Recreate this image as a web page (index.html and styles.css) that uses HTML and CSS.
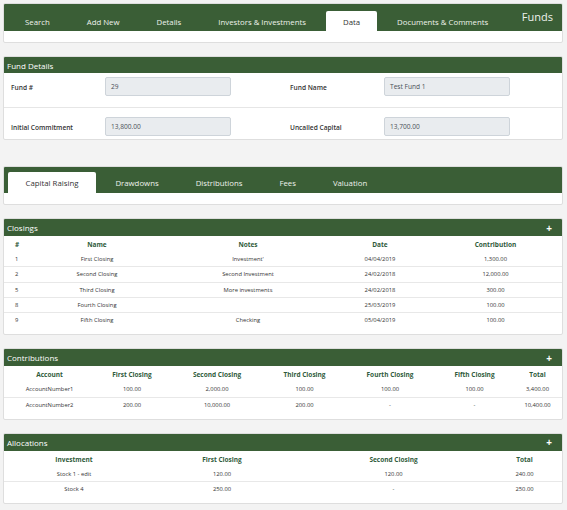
FILE: index.html
```html
<!DOCTYPE html>
<html lang="en">

<head>
    <meta charset="UTF-8">
    <meta name="viewport" content="width=device-width, initial-scale=1.0">
    <link rel="stylesheet" href="styles.css">
    <title>Funds</title>
</head>

<body>
    <!-- main navigation -->
    <div class="card">
        <div class="nav">
            <span class="tab">Search</span>
            <span class="tab">Add New</span>
            <span class="tab">Details</span>
            <span class="tab">Investors &amp; Investments</span>
            <span class="tab active">Data</span>
            <span class="tab">Documents &amp; Comments</span>
            <span class="title">Funds</span>
        </div>
        <div class="navBody"></div>
    </div>

    <div class="card">
        <div class="cardHeader small">Fund Details</div>
        <div class="fieldRow">
            <div class="field">
                <label>Fund #</label>
                <div class="input">29</div>
            </div>
            <div class="field">
                <label>Fund Name</label>
                <div class="input">Test Fund 1</div>
            </div>
        </div>
        <hr class="sep">
        <div class="fieldRow last">
            <div class="field">
                <label>Initial Commitment</label>
                <div class="input">13,800.00</div>
            </div>
            <div class="field">
                <label>Uncalled Capital</label>
                <div class="input">13,700.00</div>
            </div>
        </div>
    </div>

    <!-- sub tabs -->
    <div class="card subTabs">
        <div class="nav nav2">
            <span class="tab active">Capital Raising</span>
            <span class="tab">Drawdowns</span>
            <span class="tab">Distributions</span>
            <span class="tab">Fees</span>
            <span class="tab">Valuation</span>
        </div>
        <div class="navBody"></div>
    </div>

    <div class="card">
        <div class="cardHeader">Closings <span class="plus">+</span></div>
        <table class="grid">
            <colgroup>
                <col class="w25"><col class="w136"><col class="w166"><col class="w98"><col class="w133">
            </colgroup>
            <thead>
                <tr><th class="left">#</th><th>Name</th><th>Notes</th><th>Date</th><th>Contribution</th></tr>
            </thead>
            <tbody>
                <tr><td class="left">1</td><td>First Closing</td><td>Investment'</td><td>04/04/2019</td><td>1,300.00</td></tr>
                <tr><td class="left">2</td><td>Second Closing</td><td>Second Investment</td><td>24/02/2018</td><td>12,000.00</td></tr>
                <tr><td class="left">5</td><td>Third Closing</td><td>More investments</td><td>24/02/2018</td><td>300.00</td></tr>
                <tr><td class="left">8</td><td>Fourth Closing</td><td></td><td>25/03/2019</td><td>100.00</td></tr>
                <tr><td class="left">9</td><td>Fifth Closing</td><td>Checking</td><td>05/04/2019</td><td>100.00</td></tr>
            </tbody>
        </table>
    </div>

    <div class="card">
        <div class="cardHeader">Contributions <span class="plus">+</span></div>
        <table class="grid">
            <colgroup>
                <col class="w91"><col class="w74"><col class="w96"><col class="w79"><col class="w92"><col class="w77"><col class="w49">
            </colgroup>
            <thead>
                <tr><th>Account</th><th>First Closing</th><th>Second Closing</th><th>Third Closing</th><th>Fourth Closing</th><th>Fifth Closing</th><th>Total</th></tr>
            </thead>
            <tbody>
                <tr><td>AccountNumber1</td><td>100.00</td><td>2,000.00</td><td>100.00</td><td>100.00</td><td>100.00</td><td>3,400.00</td></tr>
                <tr><td>AccountNumber2</td><td>200.00</td><td>10,000.00</td><td>200.00</td><td>-</td><td>-</td><td>10,400.00</td></tr>
            </tbody>
        </table>
    </div>

    <div class="card">
        <div class="cardHeader">Allocations <span class="plus">+</span></div>
        <table class="grid">
            <colgroup>
                <col class="w140"><col class="w156"><col class="w187"><col class="w75">
            </colgroup>
            <thead>
                <tr><th>Investment</th><th>First Closing</th><th>Second Closing</th><th>Total</th></tr>
            </thead>
            <tbody>
                <tr><td>Stock 1 - edit</td><td>120.00</td><td>120.00</td><td>240.00</td></tr>
                <tr><td>Stock 4</td><td>250.00</td><td>-</td><td>250.00</td></tr>
            </tbody>
        </table>
    </div>
</body>
</html>
```

FILE: styles.css
```css
* {
    box-sizing: border-box;
}

body {
    margin: 0;
    padding: 3px 4px 0 3px;
    background-color: #f3f3f3;
    font-family: "Open Sans", "Noto Sans", sans-serif;
    color: #333;
}

.card {
    width: 560px;
    background-color: #fff;
    border: 1px solid #dedede;
    border-radius: 2px;
    margin-bottom: 13px;
    overflow: hidden;
}

.subTabs {
    margin-top: 26px;
}

/* tabs */
.nav {
    display: flex;
    align-items: flex-end;
    height: 27px;
    padding-left: 4.5px;
    background-color: #3a5e36;
}

.nav2 {
    height: 26px;
    padding-left: 4px;
}

.tab {
    height: 20px;
    line-height: 22px;
    padding: 0 16.5px;
    margin-right: 4px;
    font-size: 7.8px;
    color: #eef2ec;
    white-space: nowrap;
}

.nav2 .tab {
    height: 21px;
    padding: 0 17.5px;
    margin-right: 2px;
}

.tab.active {
    background-color: #fff;
    color: #333;
    border-radius: 2px 2px 0 0;
}

.title {
    margin-left: auto;
    align-self: center;
    padding: 0 9px 2px 0;
    font-size: 11px;
    color: #eef2ec;
}

.navBody {
    height: 11px;
}

/* card headers */
.cardHeader {
    display: flex;
    align-items: center;
    height: 17px;
    padding: 0 10px 0 3px;
    background-color: #3a5e36;
    color: #fff;
    font-size: 8px;
}

.cardHeader.small {
    height: 16px;
}

.plus {
    margin-left: auto;
    font-size: 10px;
    font-weight: 700;
}

/* fund details */
.fieldRow {
    display: grid;
    grid-template-columns: 1fr 1fr;
    padding: 4px 0;
}

.fieldRow.last {
    padding-bottom: 3px;
}

.field {
    display: flex;
    align-items: center;
    padding-left: 7px;
}

.field label {
    width: 94px;
    padding-top: 2px;
    font-size: 6.6px;
    font-weight: 600;
    color: #333;
}

.input {
    width: 126px;
    height: 19px;
    line-height: 17px;
    padding-left: 5px;
    background-color: #e9ecef;
    border: 1px solid #ced4da;
    border-radius: 2px;
    font-size: 6.6px;
    color: #495057;
}

.sep {
    margin: 7px 0 5px;
    border: 0;
    border-top: 1px solid #e6e6e6;
}

/* tables */
.grid {
    width: 100%;
    table-layout: fixed;
    border-collapse: separate;
    border-spacing: 0;
    margin-bottom: 7px;
}

.grid th {
    height: 16px;
    padding: 1px 0 0;
    font-size: 6.5px;
    font-weight: 700;
    color: #2f5b3b;
    text-align: center;
}

.grid td {
    padding: 0;
    line-height: 14.25px;
    font-size: 5.8px;
    color: #333;
    text-align: center;
    white-space: nowrap;
}

.grid tbody tr + tr td {
    border-top: 1px solid #e8e8e8;
}

.grid .left {
    text-align: left;
    padding-left: 11px;
}

.w25 { width: 25px; }
.w136 { width: 136px; }
.w166 { width: 166px; }
.w98 { width: 98px; }
.w133 { width: 133px; }
.w91 { width: 91px; }
.w74 { width: 74px; }
.w96 { width: 96px; }
.w79 { width: 79px; }
.w92 { width: 92px; }
.w77 { width: 77px; }
.w49 { width: 49px; }
.w140 { width: 140px; }
.w156 { width: 156px; }
.w187 { width: 187px; }
.w75 { width: 75px; }
```
